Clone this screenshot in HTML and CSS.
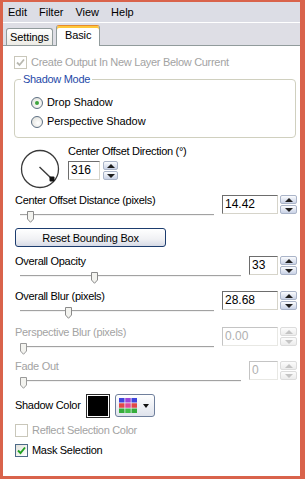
FILE: index.html
```html
<!DOCTYPE html>
<html lang="en">
<head>
    <meta charset="UTF-8">
    <meta name="viewport" content="width=device-width, initial-scale=1.0">
    <title>Drop Shadow</title>
    <link rel="stylesheet" href="styles.css">
</head>
<body>
    <div class="window">
        <!-- MENU -->
        <div class="menubar">
            <span>Edit</span>
            <span>Filter</span>
            <span>View</span>
            <span>Help</span>
        </div>

        <!-- TABS -->
        <div class="tabstrip">
            <div class="tab">Settings</div>
            <div class="tab active">Basic</div>
        </div>

        <div class="panel">
            <div class="check-row disabled first">
                <span class="checkbox">
                    <svg width="11" height="11" viewBox="0 0 11 11"><path d="M2 5.5 L4.5 8 L9 2.5" fill="none" stroke="#b8b8b0" stroke-width="1.8"/></svg>
                </span>
                <span>Create Output In New Layer Below Current</span>
            </div>

            <fieldset class="group">
                <legend>Shadow Mode</legend>
                <div class="radio-row"><span class="radio on"></span>Drop Shadow</div>
                <div class="radio-row"><span class="radio"></span>Perspective Shadow</div>
            </fieldset>

            <div class="dial-row">
                <svg class="dial" width="40" height="40" viewBox="0 0 40 40">
                    <circle cx="20" cy="20" r="18.5" fill="#fff" stroke="#3a3a3a" stroke-width="1.3"/>
                    <line x1="19.5" y1="18" x2="32" y2="30" stroke="#3a3a3a" stroke-width="1.4"/>
                    <rect x="29.5" y="27.5" width="5" height="5" rx="1" fill="#111"/>
                </svg>
                <div class="dial-side">
                    <div class="label">Center Offset Direction (°)</div>
                    <div class="spinner direction">
                        <div class="spin-input">316</div>
                        <div class="spin-arrows"><span class="spin-btn up"></span><span class="spin-btn down"></span></div>
                    </div>
                </div>
            </div>

            <div class="control distance">
                <div class="label">Center Offset Distance (pixels)</div>
                <div class="slider">
                    <div class="track"></div>
                    <svg class="thumb" style="left: 7px" width="7" height="12" viewBox="0 0 7 12"><path d="M0.5 0.5 H6.5 V8 L3.5 11.3 L0.5 8 Z" fill="#f3f3ef" stroke="#8a8a8a"/></svg>
                </div>
                <div class="spinner">
                    <div class="spin-input">14.42</div>
                    <div class="spin-arrows"><span class="spin-btn up"></span><span class="spin-btn down"></span></div>
                </div>
            </div>

            <button class="reset-btn">Reset Bounding Box</button>

            <div class="control opacity">
                <div class="label">Overall Opacity</div>
                <div class="slider">
                    <div class="track"></div>
                    <svg class="thumb" style="left: 71px" width="7" height="12" viewBox="0 0 7 12"><path d="M0.5 0.5 H6.5 V8 L3.5 11.3 L0.5 8 Z" fill="#f3f3ef" stroke="#8a8a8a"/></svg>
                </div>
                <div class="spinner narrow">
                    <div class="spin-input">33</div>
                    <div class="spin-arrows"><span class="spin-btn up"></span><span class="spin-btn down"></span></div>
                </div>
            </div>

            <div class="control blur">
                <div class="label">Overall Blur (pixels)</div>
                <div class="slider">
                    <div class="track"></div>
                    <svg class="thumb" style="left: 45px" width="7" height="12" viewBox="0 0 7 12"><path d="M0.5 0.5 H6.5 V8 L3.5 11.3 L0.5 8 Z" fill="#f3f3ef" stroke="#8a8a8a"/></svg>
                </div>
                <div class="spinner">
                    <div class="spin-input">28.68</div>
                    <div class="spin-arrows"><span class="spin-btn up"></span><span class="spin-btn down"></span></div>
                </div>
            </div>

            <div class="control perspective disabled">
                <div class="label">Perspective Blur (pixels)</div>
                <div class="slider">
                    <div class="track"></div>
                    <svg class="thumb" style="left: 0px" width="7" height="12" viewBox="0 0 7 12"><path d="M0.5 0.5 H6.5 V8 L3.5 11.3 L0.5 8 Z" fill="#f3f3ef" stroke="#9a9a9a"/></svg>
                </div>
                <div class="spinner">
                    <div class="spin-input">0.00</div>
                    <div class="spin-arrows"><span class="spin-btn up"></span><span class="spin-btn down"></span></div>
                </div>
            </div>

            <div class="control fade disabled">
                <div class="label">Fade Out</div>
                <div class="slider">
                    <div class="track"></div>
                    <svg class="thumb" style="left: 0px" width="7" height="12" viewBox="0 0 7 12"><path d="M0.5 0.5 H6.5 V8 L3.5 11.3 L0.5 8 Z" fill="#f3f3ef" stroke="#9a9a9a"/></svg>
                </div>
                <div class="spinner narrow">
                    <div class="spin-input">0</div>
                    <div class="spin-arrows"><span class="spin-btn up"></span><span class="spin-btn down"></span></div>
                </div>
            </div>

            <div class="color-row">
                <span class="color-label">Shadow Color</span>
                <span class="swatch"></span>
                <span class="color-btn">
                    <svg width="18" height="15" viewBox="0 0 18 15">
                        <rect x="0" y="0" width="5.5" height="4.5" fill="#3f45dc"/>
                        <rect x="6.25" y="0" width="5.5" height="4.5" fill="#9a45d8"/>
                        <rect x="12.5" y="0" width="5.5" height="4.5" fill="#3f45dc"/>
                        <rect x="0" y="5.25" width="5.5" height="4.5" fill="#e04848"/>
                        <rect x="6.25" y="5.25" width="5.5" height="4.5" fill="#e0489c"/>
                        <rect x="12.5" y="5.25" width="5.5" height="4.5" fill="#e04848"/>
                        <rect x="0" y="10.5" width="5.5" height="4.5" fill="#36ad3c"/>
                        <rect x="6.25" y="10.5" width="5.5" height="4.5" fill="#45be4a"/>
                        <rect x="12.5" y="10.5" width="5.5" height="4.5" fill="#36ad3c"/>
                    </svg>
                    <span class="caret"></span>
                </span>
            </div>

            <div class="check-row disabled reflect">
                <span class="checkbox"></span>
                <span>Reflect Selection Color</span>
            </div>

            <div class="check-row mask">
                <span class="checkbox">
                    <svg width="11" height="11" viewBox="0 0 11 11"><path d="M2 5.5 L4.5 8 L9 2.5" fill="none" stroke="#21a121" stroke-width="1.9"/></svg>
                </span>
                <span>Mask Selection</span>
            </div>
        </div>
    </div>
</body>
</html>
```

FILE: styles.css
```css
body {
    margin: 0;
    font-family: "Liberation Sans", Arial, sans-serif;
    font-size: 11px;
    line-height: 13px;
    color: #000;
    background: #fff;
}

.window {
    width: 305px;
    height: 479px;
    box-sizing: border-box;
    border-style: solid;
    border-color: #d9634b;
    border-width: 2px 5px 3px 3px;
    background: #fff;
}

/* menu + tabs */
.menubar {
    height: 20px;
    display: flex;
    align-items: center;
    gap: 12px;
    padding-left: 5px;
    background: #dcdde5;
    border-bottom: 1px solid #fff;
}

.tabstrip {
    height: 22px;
    display: flex;
    align-items: flex-end;
    gap: 3px;
    padding-left: 3px;
    background: #dedee5;
    border-bottom: 1px solid #919b9c;
}

.tab {
    height: 17px;
    box-sizing: border-box;
    padding: 0 3px;
    line-height: 16px;
    font-size: 11px;
    letter-spacing: -0.1px;
    border: 1px solid #919b9c;
    border-bottom: none;
    border-radius: 3px 3px 0 0;
    background: linear-gradient(#ffffff, #ecebe5);
}

.tab.active {
    position: relative;
    z-index: 1;
    height: 21px;
    margin-bottom: -1px;
    padding: 0 8px;
    line-height: 18px;
    background: #fff;
    border-top: 1px solid #e68b2c;
    box-shadow: inset 0 2px 0 #ffc83c;
}

.panel {
    padding: 0 3px 0 12px;
    letter-spacing: -0.3px;
}

.disabled {
    color: #a3a3a3;
}

/* checkboxes */
.check-row {
    display: flex;
    align-items: center;
    gap: 4px;
    height: 13px;
}

.check-row.first {
    margin: 10px 0 0 -1px;
}

.check-row.reflect {
    margin-top: 6px;
}

.check-row.mask {
    margin-top: 7px;
}

.checkbox {
    width: 13px;
    height: 13px;
    box-sizing: border-box;
    display: flex;
    align-items: center;
    justify-content: center;
    border: 1px solid #4d6a86;
    background: linear-gradient(135deg, #e2e2dc, #ffffff);
}

.disabled .checkbox {
    border-color: #c9c7ba;
    background: #fff;
}

/* shadow mode group */
.group {
    margin: 4px 1px 0 -1px;
    padding: 10px 8px 9px 16px;
    min-width: 0;
    border: 1px solid #d0d0bf;
    border-radius: 4px;
}

.group legend {
    margin-left: -10px;
    padding: 0 2px;
    color: #1f4aa8;
    line-height: 13px;
}

.radio-row {
    display: flex;
    align-items: center;
    gap: 4px;
    height: 13px;
    letter-spacing: -0.1px;
}

.radio-row + .radio-row {
    margin-top: 6px;
}

.radio {
    width: 12px;
    height: 12px;
    box-sizing: border-box;
    border: 1px solid #5d6f82;
    border-radius: 50%;
    background: radial-gradient(circle at 60% 60%, #ffffff, #dcdcd6);
    display: flex;
    align-items: center;
    justify-content: center;
}

.radio.on::after {
    content: "";
    width: 4px;
    height: 4px;
    border-radius: 50%;
    background: #3ea43e;
}

/* direction dial */
.dial-row {
    display: flex;
    margin-top: 7px;
    height: 44px;
}

.dial {
    margin: 4px 0 0 5px;
}

.dial-side {
    margin-left: 8px;
}

.dial-side .spinner {
    margin-top: 3px;
}

/* slider + spinner controls */
.control {
    display: grid;
    grid-template-columns: 1fr auto;
    column-gap: 8px;
}

.control .label {
    grid-column: 1;
    grid-row: 1;
    white-space: nowrap;
}

.control .slider {
    grid-column: 1;
    grid-row: 2;
}

.control .spinner {
    grid-column: 2;
    grid-row: 1 / span 2;
    align-self: start;
    margin-top: 1px;
}

.control.distance { margin-top: 5px; }
.control.opacity { margin-top: 8px; }
.control.blur { margin-top: 8px; }
.control.perspective { margin-top: 9px; }
.control.fade { margin-top: 7px; }

.slider {
    position: relative;
    height: 14px;
    margin-left: 5px;
}

.track {
    margin-top: 7px;
    border-top: 1px solid #a2a2a2;
    border-bottom: 1px solid #f2f2f2;
}

.thumb {
    position: absolute;
    top: 4px;
    display: block;
}

.spinner {
    display: flex;
    gap: 2px;
    letter-spacing: 0;
}

.spin-input {
    width: 56px;
    height: 19px;
    box-sizing: border-box;
    padding-left: 2px;
    font-size: 12px;
    line-height: 17px;
    border: 1px solid;
    border-color: #6d6d6d #d6d4ca #d6d4ca #6d6d6d;
    background: #fff;
}

.spinner.narrow .spin-input {
    width: 29px;
}

.spinner.direction .spin-input {
    width: 32px;
}

.spinner.direction {
    gap: 3px;
}

.spin-arrows {
    width: 17px;
    height: 19px;
    display: flex;
    flex-direction: column;
    gap: 1px;
}

.spinner.direction .spin-arrows {
    width: 15px;
}

.spin-btn {
    position: relative;
    flex: 1;
    border: 1px solid #aab4c8;
    border-radius: 2px;
    background: linear-gradient(#fbfcfe, #c9d2e6);
}

.spin-btn::after {
    content: "";
    position: absolute;
    left: 50%;
    top: 50%;
    margin: -2px 0 0 -4px;
    border-left: 4px solid transparent;
    border-right: 4px solid transparent;
}

.spin-btn.up::after {
    border-bottom: 4px solid #1e1e1e;
}

.spin-btn.down::after {
    border-top: 4px solid #1e1e1e;
}

.disabled .spin-input {
    color: #b0b0b0;
    border-color: #c4c4c4 #e8e8e4 #e8e8e4 #c4c4c4;
}

.disabled .spin-btn {
    border-color: #dcdcdc;
    background: linear-gradient(#fcfcfc, #ececec);
}

.disabled .spin-btn.up::after {
    border-bottom-color: #c4c4c4;
}

.disabled .spin-btn.down::after {
    border-top-color: #c4c4c4;
}

/* button */
.reset-btn {
    display: block;
    width: 151px;
    height: 19px;
    margin: 7px 0 0 0;
    padding: 0;
    font-family: inherit;
    font-size: 11px;
    letter-spacing: -0.2px;
    color: #000;
    border: 1px solid #1c3c6e;
    border-radius: 3px;
    background: linear-gradient(#ffffff, #f0f1f4 60%, #d6dae6);
}

/* shadow colour */
.color-row {
    display: flex;
    align-items: center;
    height: 25px;
    margin-top: 6px;
}

.color-label {
    width: 71px;
    white-space: nowrap;
}

.swatch {
    width: 24px;
    height: 24px;
    box-sizing: border-box;
    border: 1px solid #2a2a2a;
    box-shadow: inset 0 0 0 1px #fff;
    background: #000;
}

.color-btn {
    display: flex;
    align-items: center;
    gap: 6px;
    width: 40px;
    height: 23px;
    box-sizing: border-box;
    margin-left: 5px;
    padding-left: 3px;
    border: 1px solid #6f7f9c;
    border-radius: 3px;
    background: linear-gradient(#ffffff, #dfe3ec);
}

.caret {
    border-left: 3.5px solid transparent;
    border-right: 3.5px solid transparent;
    border-top: 4px solid #111;
}
```
